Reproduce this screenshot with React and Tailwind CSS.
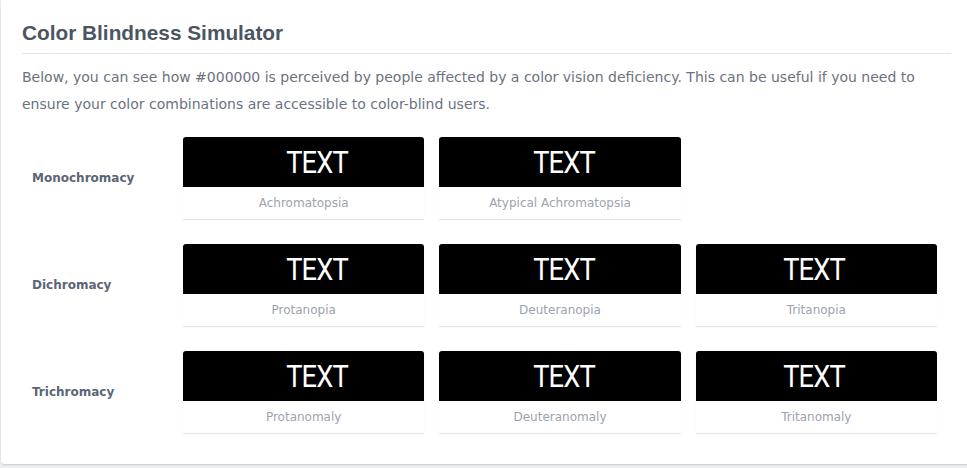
const rows = [
  { label: "Monochromacy", items: ["Achromatopsia", "Atypical Achromatopsia"] },
  { label: "Dichromacy", items: ["Protanopia", "Deuteranopia", "Tritanopia"] },
  { label: "Trichromacy", items: ["Protanomaly", "Deuteranomaly", "Tritanomaly"] },
];

// the sample word isn't quite centred in the reference; nudge per column
const nudge = ["ml-[26px]", "ml-[8px]", "mr-[4px]"];

function Swatch({ name, col }) {
  return (
    <div className="rounded-t-[3px] bg-white shadow-[0_1px_1px_rgba(0,0,0,0.12)]">
      <div className="flex h-[50px] items-center justify-center rounded-t-[3px] bg-black">
        <span className={`${nudge[col]} inline-block scale-x-[0.88] font-['Roboto',sans-serif] text-[31px] leading-none tracking-[-1px] text-white`}>
          TEXT
        </span>
      </div>
      <div className="flex h-[32px] items-center justify-center text-[12px] text-[#9ca3af]">
        {name}
      </div>
    </div>
  );
}

export default function App() {
  return (
    <div className="h-[468px] w-full overflow-hidden bg-[#eef0f3]">
      <div className="ml-[1px] h-[464px] w-[971px] rounded-b-[3px] bg-white px-[21px] pt-[20px] font-['DejaVu_Sans',sans-serif] shadow-[0_1px_2px_rgba(0,0,0,0.15)]">
        <h2 className="border-b border-[#e2e4e8] pb-[7px] font-['Liberation_Sans',sans-serif] text-[20.8px] font-bold leading-[26px] text-[#4b5563]">
          Color Blindness Simulator
        </h2>
        <p className="mt-[10px] text-[14px] leading-[27px] text-[#6b7280]">
          Below, you can see how #000000 is perceived by people affected by a color vision deficiency. This can be useful if you need to ensure your color combinations are accessible to color-blind users.
        </p>
        <div className="mt-[19px] flex flex-col gap-[25px]">
          {rows.map((row) => (
            <div key={row.label} className="flex items-center">
              <div className="w-[161px] pl-[10px] text-[12px] font-bold text-[#5b6675]">
                {row.label}
              </div>
              <div className="grid w-[754px] grid-cols-3 gap-[15px]">
                {row.items.map((it, i) => (
                  <Swatch key={it} name={it} col={i} />
                ))}
              </div>
            </div>
          ))}
        </div>
      </div>
    </div>
  );
}
